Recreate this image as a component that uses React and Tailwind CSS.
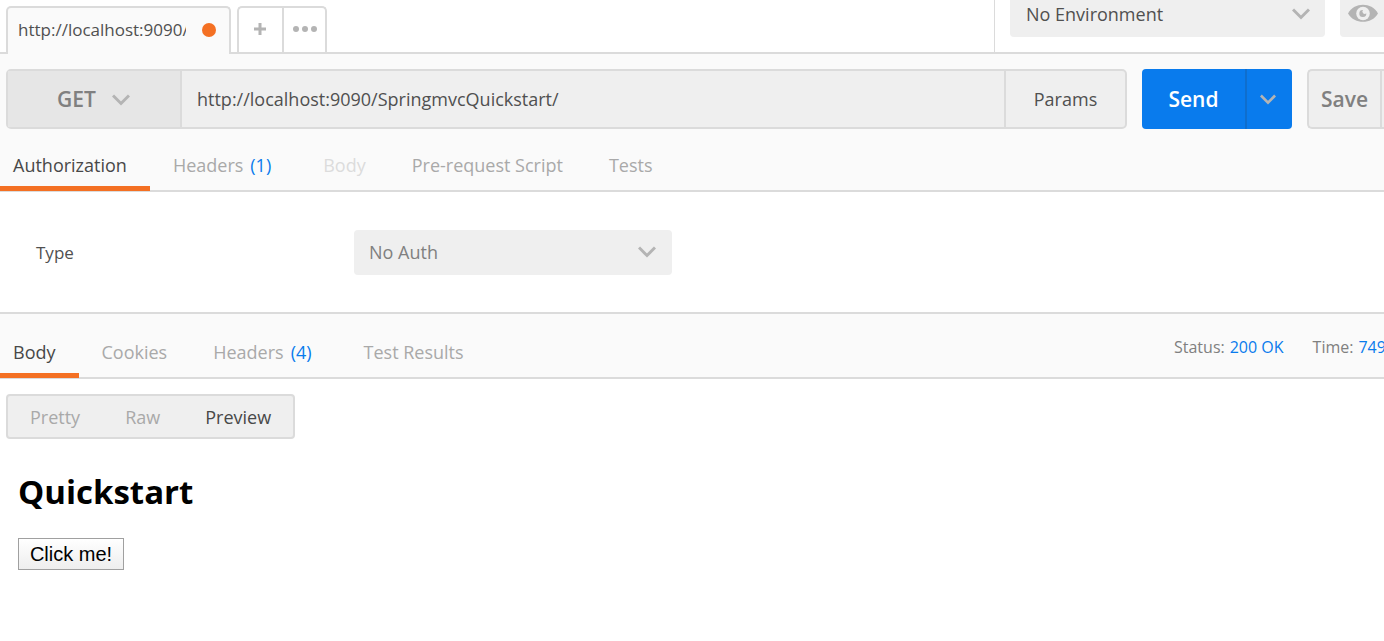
function Chevron({ className = "", size = "h-3 w-[18px]" }) {
  return (
    <svg
      viewBox="0 0 18 12"
      fill="none"
      stroke="currentColor"
      strokeWidth="3"
      aria-hidden="true"
      className={`pointer-events-none shrink-0 ${size} ${className}`}
    >
      <path d="M1 1.5 9 9.5 17 1.5" />
    </svg>
  );
}

function Tab({ children, active, muted, count, first }) {
  return (
    <button
      type="button"
      role="tab"
      aria-selected={active ? "true" : "false"}
      className={`relative h-full whitespace-pre ${first ? "pr-[23px] pl-[13px]" : "px-[23px]"} ${
        active ? "text-[#484848]" : muted ? "text-[#dcdcdc]" : "text-[#a9a9a9]"
      }`}
    >
      {children}
      {count && <span className="mr-[6px] ml-[7px] text-[#097bed]">{count}</span>}
      {active && <span className="absolute bottom-0 left-0 h-[5px] w-full bg-[#f47023]" />}
    </button>
  );
}

function TopBar() {
  return (
    <header className="flex h-[54px] shrink-0 bg-white">
      <div className="flex min-w-0 flex-1 items-stretch">
        <div className="w-[6px] border-b-2 border-[#dbdbdb]" />
        <div className="mt-[6px] flex w-[225px] items-center rounded-t-[5px] border-2 border-b-0 border-[#dbdbdb] bg-[#fafafa] pb-[2px] pl-[10px]">
          <div className="w-[168px] overflow-hidden text-[17px] leading-6 whitespace-nowrap text-[#505050]">
            http://localhost:9090/SpringmvcQuickstart/
          </div>
          <span className="ml-4 h-[14px] w-[14px] shrink-0 rounded-full bg-[#f47023]" />
        </div>
        <div className="flex flex-1 border-b-2 border-[#dbdbdb] pt-[6px] pl-[6px]">
          <button
            type="button"
            aria-label="New tab"
            className="flex w-[45px] items-center justify-center rounded-tl-[5px] border-t-2 border-l-2 border-[#dbdbdb] pr-[2px] pb-[2px] text-[#b4b4b4]"
          >
            <svg viewBox="0 0 12 12" className="h-3 w-3" fill="currentColor" aria-hidden="true">
              <path d="M4.5 0h3v4.5H12v3H7.5V12h-3V7.5H0v-3h4.5z" />
            </svg>
          </button>
          <button
            type="button"
            aria-label="More tabs"
            className="flex w-[45px] items-center justify-center rounded-tr-[5px] border-2 border-b-0 border-[#dbdbdb] pb-[2px] text-[#b4b4b4]"
          >
            <svg viewBox="0 0 24 6" className="h-[6px] w-6" fill="currentColor" aria-hidden="true">
              <circle cx="3" cy="3" r="3" />
              <circle cx="12" cy="3" r="3" />
              <circle cx="21" cy="3" r="3" />
            </svg>
          </button>
        </div>
      </div>
      <div className="flex w-[390px] shrink-0 items-start justify-between border-b-2 border-l border-[#dbdbdb] pl-[15px]">
        <div className="relative flex h-[37px] w-[315px] items-start rounded-b-[4px] bg-[#efefef]">
          <select
            aria-label="Environment"
            className="h-7 w-full appearance-none bg-transparent pl-4 text-lg leading-7 text-[#505050]"
          >
            <option>No Environment</option>
          </select>
          <Chevron className="absolute top-2 right-[15px] text-[#b4b4b4]" />
        </div>
        <button
          type="button"
          aria-label="Environment quick look"
          className="flex h-[37px] w-11 justify-center rounded-bl-[4px] bg-[#efefef] pt-1 pl-[2px] text-[#b4b4b4]"
        >
          <svg viewBox="0 0 30 18" className="h-[18px] w-[30px]" aria-hidden="true">
            <path
              fill="currentColor"
              d="M0 9.500C3.500 3.500 9 .8 15 .8S26.500 3.500 30 9.500c-3.500 5.700-9 8.300-15 8.300S3.500 15.200 0 9.500z"
            />
            <circle cx="15" cy="9.500" r="6.800" fill="#efefef" />
            <path fill="currentColor" d="M15 6a2.300 2.300 0 0 0 3.300 3.200A3.500 3.500 0 1 1 15 6z" />
          </svg>
        </button>
      </div>
    </header>
  );
}

function RequestBar() {
  return (
    <div className="flex h-[75px] pt-[15px] pl-[6px]">
      <div className="flex min-w-0 flex-1 rounded-[5px] border-2 border-[#dbdbdb] bg-[#efefef]">
        <div className="relative flex w-[174px] shrink-0 items-center border-r-2 border-[#dbdbdb] bg-[#e6e6e6]">
          <select
            aria-label="Request method"
            className="h-full w-full appearance-none bg-transparent pt-[2px] pl-[49px] text-[21px] font-semibold text-[#808080]"
          >
            <option>GET</option>
          </select>
          <Chevron className="absolute top-[23px] left-[104px] text-[#b4b4b4]" />
        </div>
        <input
          aria-label="Request URL"
          defaultValue="http://localhost:9090/SpringmvcQuickstart/"
          className="min-w-0 flex-1 bg-transparent px-[15px] text-lg text-[#505050] outline-none"
        />
        <button
          type="button"
          className="w-[121px] shrink-0 border-l-2 border-[#dbdbdb] text-lg text-[#505050]"
        >
          Params
        </button>
      </div>
      <div className="ml-[15px] flex w-[150px] shrink-0 overflow-hidden rounded-[4px] bg-[#097bed] text-white">
        <button type="button" className="w-[103px] pt-[2px] text-[21px] font-semibold">
          Send
        </button>
        <button
          type="button"
          aria-label="Send options"
          className="flex flex-1 items-center justify-center border-l-2 border-[#0f6ecd] pr-1 text-[#b4b4b4]"
        >
          <Chevron size="h-[11px] w-4" />
        </button>
      </div>
      <div className="ml-[15px] flex w-[77px] shrink-0 rounded-l-[5px] border-2 border-r-0 border-[#dbdbdb] bg-[#efefef]">
        <button type="button" className="w-[71px] pt-[2px] text-[21px] font-semibold text-[#808080]">
          Save
        </button>
        <button
          type="button"
          aria-label="Save options"
          className="flex-1 border-l-2 border-[#dbdbdb]"
        />
      </div>
    </div>
  );
}

function Authorization() {
  return (
    <section className="flex h-[120px] shrink-0 items-center bg-white">
      <label htmlFor="auth-type" className="w-[354px] pt-[2px] pl-9 text-[17px] text-[#505050]">
        Type
      </label>
      <div className="relative flex h-[45px] w-[318px] items-center rounded-[4px] bg-[#efefef]">
        <select
          id="auth-type"
          className="h-full w-full appearance-none bg-transparent pl-[15px] text-lg text-[#808080]"
        >
          <option>No Auth</option>
        </select>
        <Chevron className="absolute right-4 text-[#b4b4b4]" />
      </div>
    </section>
  );
}

export default function App() {
  return (
    <div className="flex min-h-screen flex-col overflow-hidden bg-white font-['Open_Sans',sans-serif]">
      <TopBar />
      <section className="shrink-0 bg-[#fafafa]">
        <RequestBar />
        <div role="tablist" className="flex h-[63px] border-b-2 border-[#dbdbdb] text-lg">
          <div className="-mb-px flex pt-[9px]">
            <Tab first active>Authorization</Tab>
            <Tab count="(1)">Headers</Tab>
            <Tab muted>Body</Tab>
            <Tab>Pre-request Script</Tab>
            <Tab>Tests</Tab>
          </div>
        </div>
      </section>
      <Authorization />
      <section className="flex h-[67px] shrink-0 justify-between border-y-2 border-[#dbdbdb] bg-[#fafafa]">
        <div role="tablist" className="-mb-px flex pt-[11px] text-lg">
          <Tab first active>Body</Tab>
          <Tab>Cookies</Tab>
          <Tab count="(4)">Headers</Tab>
          <Tab>Test Results</Tab>
        </div>
        <dl className="flex w-[210px] shrink-0 overflow-hidden pt-[21px] text-base leading-6 whitespace-nowrap text-[#808080]">
          <dt>Status:</dt>
          <dd className="mr-[29px] ml-[5px] text-[#097bed]">200 OK</dd>
          <dt>Time:</dt>
          <dd className="ml-[5px] text-[#097bed]">749 ms</dd>
        </dl>
      </section>
      <main className="flex flex-col items-start pt-[15px]">
        <div className="ml-[6px] flex h-[45px] items-center rounded-[4px] border-2 border-[#dbdbdb] bg-[#efefef] text-lg text-[#a9a9a9]">
          <button type="button" className="px-[22px]">Pretty</button>
          <button type="button" className="px-[23px]">Raw</button>
          <button type="button" className="px-[22px] text-[#484848]">Preview</button>
        </div>
        <h1 className="mt-7 ml-[18px] text-[33px] leading-[50px] font-bold text-black">Quickstart</h1>
        <button
          type="button"
          className="mt-[21px] ml-[18px] h-8 w-[106px] border border-[#a0a0a0] bg-linear-to-b from-white to-[#eeeeee] font-['Liberation_Sans',Arial,sans-serif] text-xl leading-7 text-black"
        >
          Click me!
        </button>
      </main>
    </div>
  );
}
